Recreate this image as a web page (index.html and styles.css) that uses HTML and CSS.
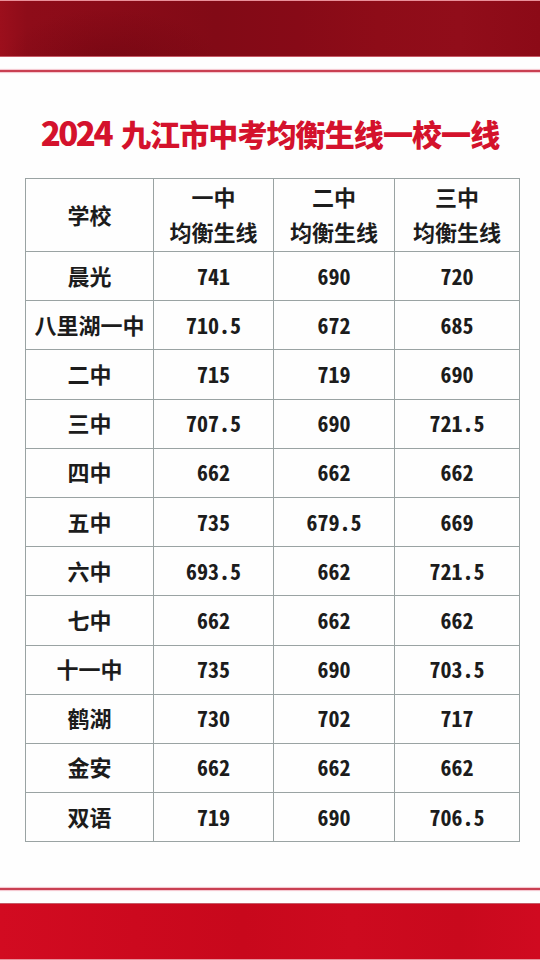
FILE: index.html
```html
<!DOCTYPE html>
<html lang="zh-CN">
<head>
<meta charset="utf-8">
<title>2024 九江市中考均衡生线一校一线</title>
<link rel="stylesheet" href="styles.css">
</head>
<body>
<div class="page">
  <div class="top-band"></div>
  <div class="top-line"></div>
  <main class="content">
    <h1 class="title"><span class="year">2024</span> 九江市中考均衡生线一校一线</h1>
    <table class="score-table">
      <colgroup>
        <col class="c-school">
        <col class="c-one">
        <col class="c-two">
        <col class="c-three">
      </colgroup>
      <thead>
        <tr class="head-row">
          <th>学校</th>
          <th>一中<br>均衡生线</th>
          <th>二中<br>均衡生线</th>
          <th>三中<br>均衡生线</th>
        </tr>
      </thead>
      <tbody>
        <tr><td>晨光</td><td>741</td><td>690</td><td>720</td></tr>
        <tr><td>八里湖一中</td><td>710.5</td><td>672</td><td>685</td></tr>
        <tr><td>二中</td><td>715</td><td>719</td><td>690</td></tr>
        <tr><td>三中</td><td>707.5</td><td>690</td><td>721.5</td></tr>
        <tr><td>四中</td><td>662</td><td>662</td><td>662</td></tr>
        <tr><td>五中</td><td>735</td><td>679.5</td><td>669</td></tr>
        <tr><td>六中</td><td>693.5</td><td>662</td><td>721.5</td></tr>
        <tr><td>七中</td><td>662</td><td>662</td><td>662</td></tr>
        <tr><td>十一中</td><td>735</td><td>690</td><td>703.5</td></tr>
        <tr><td>鹤湖</td><td>730</td><td>702</td><td>717</td></tr>
        <tr><td>金安</td><td>662</td><td>662</td><td>662</td></tr>
        <tr><td>双语</td><td>719</td><td>690</td><td>706.5</td></tr>
      </tbody>
    </table>
  </main>
  <div class="bottom-line"></div>
  <div class="bottom-band"></div>
</div>
</body>
</html>
```

FILE: styles.css
```css
html, body {
  margin: 0;
  padding: 0;
  background: #fefefe;
}

.page {
  width: 540px;
  height: 960px;
  display: flex;
  flex-direction: column;
  overflow: hidden;
}

.top-band {
  flex: 0 0 auto;
  height: 55px;
  border-top: 1px solid #e8909a;
  border-bottom: 1px solid #c65a66;
  background:
    radial-gradient(ellipse 110px 55px at 110px 62px, rgba(100, 4, 14, 0.45), rgba(100, 4, 14, 0) 100%),
    linear-gradient(90deg, #9c0f1c 0%, #8e0c19 5%, #8a0b18 20%, #820a16 40%, #870a17 55%, #8e0c18 70%, #910d1a 85%, #8c0a17 100%);
}

.top-line {
  flex: 0 0 auto;
  height: 2px;
  margin-top: 13px;
  background: #c94052;
  box-shadow: 0 0 1px 1px #f4c4cc;
}

.content {
  flex: 1 1 auto;
  display: flex;
  flex-direction: column;
  align-items: flex-start;
}

.title {
  align-self: stretch;
  margin: 40px 0 0 0;
  height: 40px;
  line-height: 40px;
  text-align: center;
  font-family: "Noto Sans CJK SC", sans-serif;
  font-weight: 900;
  font-size: 30px;
  letter-spacing: -0.9px;
  color: #d4122c;
}

.year {
  font-size: 33px;
  letter-spacing: -2.5px;
  margin-right: 4px;
}

.score-table {
  margin: 26px 0 0 25px;
  border-collapse: collapse;
  table-layout: fixed;
  width: 495px;
  font-family: "Noto Sans Mono CJK SC", "Noto Sans CJK SC", sans-serif;
  font-weight: 700;
  font-size: 22px;
  color: #1c1c1c;
}

.c-school { width: 128px; }
.c-one { width: 120px; }
.c-two { width: 121px; }
.c-three { width: 125px; }

.score-table th,
.score-table td {
  border: 1px solid #9aa3a3;
  padding: 0 0 3px 0;
  text-align: center;
  vertical-align: middle;
  font-weight: 700;
}

.head-row {
  height: 72px;
}

.head-row th {
  line-height: 35px;
  padding-bottom: 2px;
}

.score-table tbody tr {
  height: 49.2px;
}

.score-table td {
  line-height: 26px;
}

.bottom-line {
  flex: 0 0 auto;
  height: 2px;
  background: #c94052;
  box-shadow: 0 0 1px 1px #f4c4cc;
}

.bottom-band {
  flex: 0 0 auto;
  height: 55px;
  margin-top: 13px;
  border-top: 1px solid #c65a66;
  border-bottom: 1px solid #e8909a;
  background:
    linear-gradient(90deg, #d20b21 0%, #cc091e 25%, #c8081c 45%, #cd0a1f 65%, #c9091d 85%, #d00a20 100%);
}
```
